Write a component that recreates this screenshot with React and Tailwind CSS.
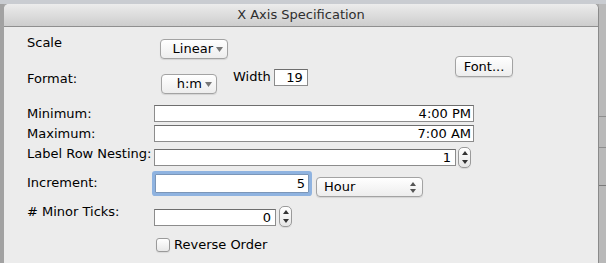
function Stepper() {
  return (
    <div className="w-[13px] h-[21px] rounded-[5px] border border-[#9a9a9a] bg-gradient-to-b from-white to-[#e6e6e6] flex flex-col items-center justify-between py-[3px] shadow-[0_1px_0_rgba(0,0,0,0.08)]">
      <svg width="6" height="4" viewBox="0 0 6 4">
        <path d="M3 0L6 4H0Z" fill="#333" />
      </svg>
      <svg width="6" height="4" viewBox="0 0 6 4">
        <path d="M0 0H6L3 4Z" fill="#333" />
      </svg>
    </div>
  );
}

function PopupButton({ label, className }) {
  return (
    <div
      className={`h-[20px] rounded-[4px] border border-[#a3a3a3] bg-gradient-to-b from-white to-[#ededed] shadow-[0_1px_1px_rgba(0,0,0,0.1)] flex items-center justify-end pr-[4px] gap-[3px] ${className}`}
    >
      <span>{label}</span>
      <svg width="7" height="5" viewBox="0 0 7 5">
        <path d="M0 0H7L3.5 5Z" fill="#777" />
      </svg>
    </div>
  );
}

function Field({ value, className }) {
  return (
    <div
      className={`h-[17px] bg-white border border-[#8c8c8c] border-t-[#6e6e6e] flex items-center justify-end pr-[2px] leading-none ${className}`}
    >
      {value}
    </div>
  );
}

export default function App() {
  return (
    <div
      className="w-[606px] h-[263px] overflow-hidden bg-[#a9a9a9] text-[13px] text-black flex flex-col"
      style={{ fontFamily: '"DejaVu Sans", "Liberation Sans", sans-serif' }}
    >
      <div className="h-[4px] shrink-0 bg-[#c9ccd1]" />
      <div className="flex flex-1 min-h-0">
        <div className="w-[4px] shrink-0 bg-[#a2a2a2]" />
        <div className="w-[595px] shrink-0 flex flex-col rounded-t-[5px] overflow-hidden bg-[#ececec] border-r border-[#8a8a8a]">
          <div className="h-[23px] shrink-0 bg-gradient-to-b from-[#ececec] to-[#cdcdcd] border-b border-[#8f8f8f] flex items-center justify-center text-[#2e2e2e]">
            X Axis Specification
          </div>

          <div className="flex-1 pl-[23px] flex flex-col">
            {/* top block */}
            <div className="flex pt-[12px]">
              <div className="w-[428px] flex flex-col">
                <div className="flex items-start h-[20px]">
                  <span className="w-[133px] leading-[16px] -mt-[4px]">Scale</span>
                  <PopupButton label="Linear" className="w-[68px]" />
                </div>
                <div className="flex items-start h-[25px] mt-[10px]">
                  <span className="w-[134px] leading-[16px] mt-[2px]">Format:</span>
                  <PopupButton label="h:m" className="w-[56px] mt-[5px]" />
                  <span className="ml-[16px] leading-[16px]">Width</span>
                  <Field value="19" className="w-[34px] ml-[3px] pr-[4px]" />
                </div>
              </div>
              <div className="mt-[17px] w-[58px] h-[21px] rounded-[4px] border border-[#a3a3a3] bg-gradient-to-b from-white to-[#ededed] shadow-[0_1px_1px_rgba(0,0,0,0.1)] flex items-center justify-center">
                Font...
              </div>
            </div>

            <div className="flex items-center mt-[11px]">
              <span className="w-[127px] leading-[16px]">Minimum:</span>
              <Field value="4:00 PM" className="w-[320px]" />
            </div>
            <div className="flex items-center mt-[3px]">
              <span className="w-[127px] leading-[16px]">Maximum:</span>
              <Field value="7:00 AM" className="w-[320px]" />
            </div>

            <div className="flex items-start mt-[5px] h-[21px]">
              <span className="w-[127px] leading-[16px] -mt-[1px] whitespace-nowrap">Label Row Nesting:</span>
              <Field value="1" className="w-[302px] mt-[2px] pr-[4px]" />
              <div className="ml-[2px]">
                <Stepper />
              </div>
            </div>

            <div className="flex items-start mt-[3px] h-[25px]">
              <span className="w-[128px] leading-[16px] mt-[4px]">Increment:</span>
              <div className="w-[154px] h-[19px] mt-[3px] bg-white border border-[#7b96b8] rounded-[1px] shadow-[0_0_0_3px_#8fb3e0] flex items-center justify-end pr-[3px]">
                5
              </div>
              <div className="ml-[7px] mt-[6px] w-[107px] h-[20px] rounded-[4px] border border-[#a3a3a3] bg-gradient-to-b from-white to-[#ededed] shadow-[0_1px_1px_rgba(0,0,0,0.1)] flex items-center justify-between pl-[7px] pr-[6px]">
                <span>Hour</span>
                <svg width="6" height="11" viewBox="0 0 6 11">
                  <path d="M3 0L6 4H0Z" fill="#555" />
                  <path d="M0 7H6L3 11Z" fill="#555" />
                </svg>
              </div>
            </div>

            <div className="flex items-start mt-[10px] h-[21px]">
              <span className="w-[127px] leading-[16px] -mt-[2px]">
                # Minor Ticks:
              </span>
              <Field value="0" className="w-[122px] mt-[3px] pr-[4px]" />
              <div className="ml-[3px]">
                <Stepper />
              </div>
            </div>

            <div className="flex items-center mt-[10px] ml-[129px]">
              <div className="w-[14px] h-[14px] rounded-[3px] border border-[#9a9a9a] bg-gradient-to-b from-white to-[#e8e8e8] shadow-[0_1px_1px_rgba(0,0,0,0.08)]" />
              <span className="ml-[4px] leading-[16px]">Reverse Order</span>
            </div>
          </div>
        </div>
        <div className="flex-1 bg-[#b9b9b9] flex flex-col">
          <div className="h-[113px] border-b border-[#8e8e8e]" />
          <div className="h-[31px] border-b border-[#8e8e8e]" />
          <div className="h-[38px] border-b border-[#7a7a7a]" />
        </div>
      </div>
    </div>
  );
}
